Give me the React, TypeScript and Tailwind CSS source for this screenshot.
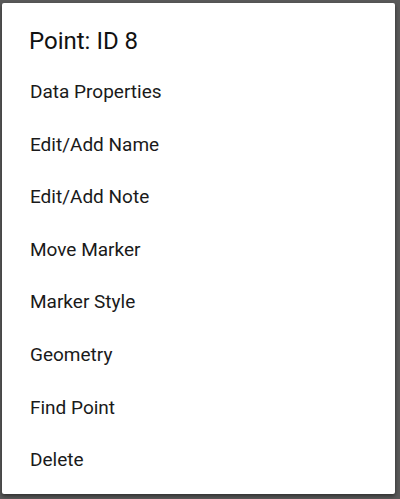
const items = [
  'Data Properties',
  'Edit/Add Name',
  'Edit/Add Note',
  'Move Marker',
  'Marker Style',
  'Geometry',
  'Find Point',
  'Delete',
];

export default function App() {
  return (
    <div
      className="w-[400px] h-[499px] bg-[#5a5a5a] pt-[3px] pl-[2px] overflow-hidden"
      style={{ fontFamily: 'Roboto, "Noto Sans", sans-serif' }}
    >
      <div className="w-[393px] h-[491px] bg-white rounded-[2px] shadow-[0_2px_4px_rgba(0,0,0,0.5)] pt-[22px]">
        {/* Title */}
        <h2 className="pl-[27px] text-[24px] leading-[32px] font-normal text-[#111111]">
          Point: ID 8
        </h2>

        {/* Menu */}
        <ul className="mt-[9px]">
          {items.map((label) => (
            <li
              key={label}
              className="h-[52.6px] flex items-center pl-[28px] text-[19px] text-[#1a1a1a]"
            >
              {label}
            </li>
          ))}
        </ul>
      </div>
    </div>
  );
}
